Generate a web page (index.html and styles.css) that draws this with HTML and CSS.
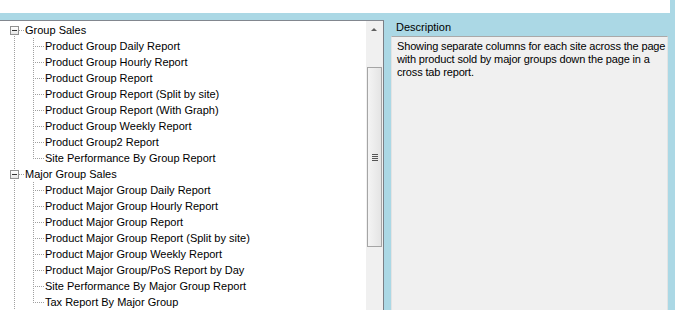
FILE: index.html
```html
<!DOCTYPE html>
<html lang="en">
<head>
    <meta charset="UTF-8">
    <title>Reports</title>
    <link rel="stylesheet" href="styles.css">
</head>
<body>
    <div class="topbar"></div>

    <div class="main">
        <div class="tree">
            <div class="tree-list">
                <div class="row root first"><span class="expander"></span>Group Sales</div>
                <div class="row child">Product Group Daily Report</div>
                <div class="row child">Product Group Hourly Report</div>
                <div class="row child">Product Group Report</div>
                <div class="row child">Product Group Report (Split by site)</div>
                <div class="row child">Product Group Report (With Graph)</div>
                <div class="row child">Product Group Weekly Report</div>
                <div class="row child">Product Group2 Report</div>
                <div class="row child last">Site Performance By Group Report</div>
                <div class="row root"><span class="expander"></span>Major Group Sales</div>
                <div class="row child">Product Major Group Daily Report</div>
                <div class="row child">Product Major Group Hourly Report</div>
                <div class="row child">Product Major Group Report</div>
                <div class="row child">Product Major Group Report (Split by site)</div>
                <div class="row child">Product Major Group Weekly Report</div>
                <div class="row child">Product Major Group/PoS Report by Day</div>
                <div class="row child">Site Performance By Major Group Report</div>
                <div class="row child last">Tax Report By Major Group</div>
            </div>
            <div class="scrollbar">
                <div class="arrow-up"></div>
                <div class="thumb">
                    <div class="grip"></div>
                </div>
            </div>
        </div>

        <div class="details">
            <div class="label">Description</div>
            <div class="textbox">Showing separate columns for each site across the page with product sold by major groups down the page in a cross tab report.</div>
        </div>
    </div>
</body>
</html>
```

FILE: styles.css
```css
body {
    margin: 0;
    background: #abd8e5;
    font-family: "Liberation Sans", Arial, sans-serif;
    font-size: 11px;
    color: #000;
    height: 310px;
    overflow: hidden;
}
.topbar {
    width: 670px;
    height: 13px;
    background: #fff;
}
.main {
    display: flex;
    padding-top: 7px;
    height: 290px;
}

/* tree view */
.tree {
    display: flex;
    width: 384px;
    background: #fff;
    border-top: 1px solid #82878f;
    border-right: 1px solid #7a7f86;
    box-sizing: border-box;
}
.tree-list {
    flex: 1;
    padding-top: 1px;
}
.row {
    height: 16px;
    line-height: 16px;
    white-space: nowrap;
    --dot-v: repeating-linear-gradient(to bottom, #a0a0a0 0 1px, transparent 1px 2px);
    --dot-h: repeating-linear-gradient(to right, #a0a0a0 0 1px, transparent 1px 2px);
}
.root {
    padding-left: 25px;
    position: relative;
    background:
        var(--dot-v) 14px 0 / 1px 100% no-repeat,
        var(--dot-h) 19px 8px / 5px 1px no-repeat;
}
.root.first {
    background:
        var(--dot-v) 14px 12px / 1px 4px no-repeat,
        var(--dot-h) 19px 8px / 5px 1px no-repeat;
}
.expander {
    position: absolute;
    left: 10px;
    top: 4px;
    width: 7px;
    height: 7px;
    border: 1px solid #919191;
    background: linear-gradient(#fff, #e6e6e6);
}
.expander::after {
    content: "";
    position: absolute;
    left: 1px;
    top: 3px;
    width: 5px;
    height: 1px;
    background: #333;
}
.child {
    padding-left: 45px;
    background:
        var(--dot-v) 14px 0 / 1px 100% no-repeat,
        var(--dot-v) 33px 0 / 1px 100% no-repeat,
        var(--dot-h) 35px 8px / 9px 1px no-repeat;
}
.child.last {
    background:
        var(--dot-v) 14px 0 / 1px 100% no-repeat,
        var(--dot-v) 33px 0 / 1px 9px no-repeat,
        var(--dot-h) 35px 8px / 9px 1px no-repeat;
}

/* scrollbar */
.scrollbar {
    width: 17px;
    background: #f0f0f0;
    display: flex;
    flex-direction: column;
    align-items: center;
}
.arrow-up {
    height: 17px;
    width: 17px;
    position: relative;
}
.arrow-up::after {
    content: "";
    position: absolute;
    left: 5px;
    top: 7px;
    border-left: 3px solid transparent;
    border-right: 3px solid transparent;
    border-bottom: 3px solid #606060;
}
.thumb {
    margin-top: 29px;
    width: 13px;
    height: 178px;
    border: 1px solid #a5a5a5;
    background: linear-gradient(to right, #f4f4f4, #e4e4e4);
    display: flex;
    align-items: center;
    justify-content: center;
}
.grip {
    width: 6px;
    height: 7px;
    background: repeating-linear-gradient(to bottom, #555 0 1px, transparent 1px 2px);
}

/* description */
.details {
    display: flex;
    flex-direction: column;
    margin-left: 7px;
    width: 277px;
}
.label {
    height: 16px;
    line-height: 14px;
    padding-left: 5px;
}
.textbox {
    flex: 1;
    background: #f0f0f0;
    border-top: 1px solid #a9a9a9;
    border-left: 1px solid #e3e3e3;
    border-right: 1px solid #e3e3e3;
    padding: 3px 0 0 5px;
    line-height: 13px;
    letter-spacing: -0.15px;
}
```
